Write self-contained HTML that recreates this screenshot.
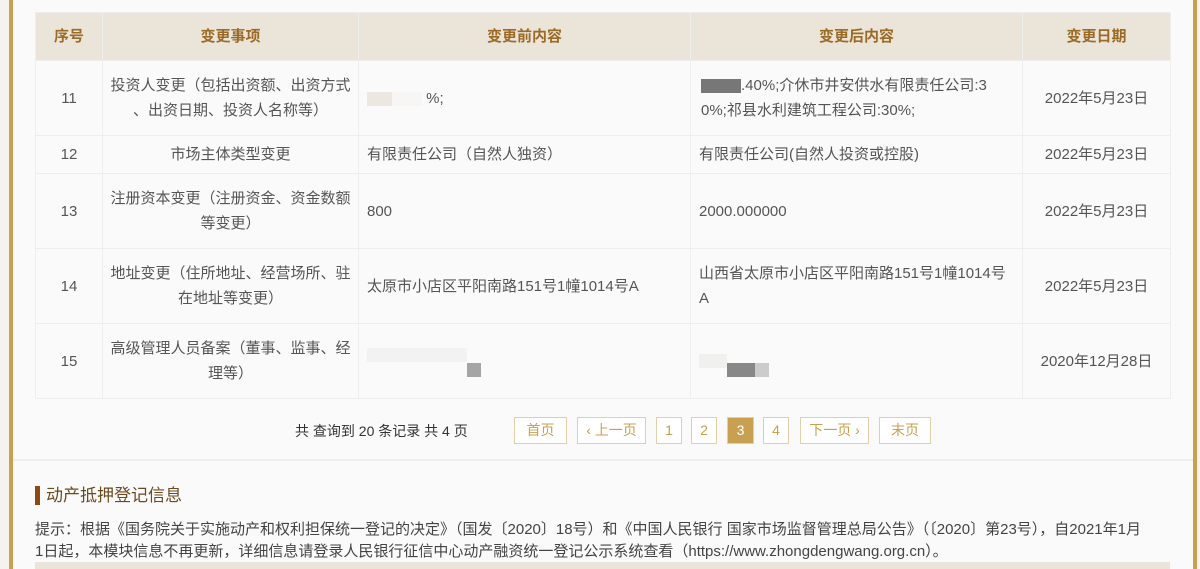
<!DOCTYPE html>
<html><head><meta charset="utf-8"><style>
*{margin:0;padding:0;box-sizing:border-box}
body{width:1200px;height:569px;overflow:hidden;background:#f6f3ee;font-family:"Liberation Sans","Noto Sans CJK SC",sans-serif;color:#555;position:relative}
.lb{position:absolute;left:9px;top:0;width:4px;height:569px;background:#c9a050}
.rb{position:absolute;left:1193px;top:0;width:4px;height:569px;background:#c9a050}
.main{position:absolute;left:13px;top:0;width:1180px;height:569px;background:#fafafa}
table{position:absolute;left:35px;top:12px;border-collapse:collapse;font-size:15px;table-layout:fixed}
td,th{border:1px solid #eeeeee;text-align:center;line-height:25px;color:#555;font-weight:normal}
th{background:#ebe4d8;color:#9a6a26;font-weight:bold;height:48px}
td.l{text-align:left;padding-left:8px}
.blur{display:inline-block;height:14px;vertical-align:middle}
.pg{position:absolute;top:417px;left:0;width:1200px;height:28px;font-size:14px}
.pg span{position:absolute;top:0;height:27px;line-height:25px;border:1px solid #e0cfa8;color:#c9a050;text-align:center;background:#fff}
.pg span.a{background:#c9a050;color:#fff}
.div{position:absolute;left:13px;top:459px;width:1180px;height:2px;background:#f0eeea}
h3{position:absolute;left:35px;top:486px;font-size:17px;font-weight:normal;color:#6b4a20;border-left:5px solid #8a4a10;padding-left:6px;line-height:19px}
.tip{position:absolute;left:35px;top:519px;font-size:15px;line-height:22px;color:#444;width:1158px;white-space:nowrap}
.band{position:absolute;left:35px;top:562px;width:1135px;height:7px;background:#ebe4d8}
</style></head><body>
<div class="main"></div>
<div class="lb"></div><div class="rb"></div>
<table>
<colgroup><col style="width:67px"><col style="width:256px"><col style="width:332px"><col style="width:332px"><col style="width:148px"></colgroup>
<tr><th>序号</th><th>变更事项</th><th>变更前内容</th><th>变更后内容</th><th>变更日期</th></tr>
<tr style="height:75px"><td>11</td><td>投资人变更（包括出资额、出资方式<br>、出资日期、投资人名称等）</td><td class="l"><span class="blur" style="width:25px;background:#ede7e2"></span><span class="blur" style="width:30px;background:#f8f6f4"></span> %;</td><td class="l" style="padding-left:10px"><span class="blur" style="width:40px;background:#777"></span>.40%;介休市井安供水有限责任公司:3<br>0%;祁县水利建筑工程公司:30%;</td><td>2022年5月23日</td></tr>
<tr style="height:38px"><td>12</td><td>市场主体类型变更</td><td class="l">有限责任公司（自然人独资）</td><td class="l">有限责任公司(自然人投资或控股)</td><td>2022年5月23日</td></tr>
<tr style="height:75px"><td>13</td><td>注册资本变更（注册资金、资金数额<br>等变更）</td><td class="l">800</td><td class="l">2000.000000</td><td>2022年5月23日</td></tr>
<tr style="height:75px"><td>14</td><td>地址变更（住所地址、经营场所、驻<br>在地址等变更）</td><td class="l">太原市小店区平阳南路151号1幢1014号A</td><td class="l">山西省太原市小店区平阳南路151号1幢1014号<br>A</td><td>2022年5月23日</td></tr>
<tr style="height:75px"><td>15</td><td>高级管理人员备案（董事、监事、经<br>理等）</td><td class="l"><span class="blur" style="width:100px;background:#f2f2f2;margin-top:-12px"></span><span class="blur" style="width:14px;background:#a5a5a5;margin-top:18px"></span></td><td class="l"><span class="blur" style="width:28px;background:#f0f0ee"></span><span class="blur" style="width:28px;background:#888;margin-top:18px"></span><span class="blur" style="width:14px;background:#ccc;margin-top:18px"></span></td><td>2020年12月28日</td></tr>
</table>
<div class="pg">
<div style="position:absolute;left:295px;top:4px;color:#333;font-size:14px">共 查询到 20 条记录 共 4 页</div>
<span style="left:514px;width:53px">首页</span>
<span style="left:577px;width:69px">‹ 上一页</span>
<span style="left:656px;width:26px">1</span>
<span style="left:691px;width:26px">2</span>
<span class="a" style="left:727px;width:27px">3</span>
<span style="left:763px;width:26px">4</span>
<span style="left:800px;width:69px">下一页 ›</span>
<span style="left:879px;width:52px">末页</span>
</div>
<div class="div"></div>
<h3>动产抵押登记信息</h3>
<div class="tip">提示：根据《国务院关于实施动产和权利担保统一登记的决定》（国发〔2020〕18号）和《中国人民银行 国家市场监督管理总局公告》（〔2020〕第23号），自2021年1月<br>1日起，本模块信息不再更新，详细信息请登录人民银行征信中心动产融资统一登记公示系统查看（https://www.zhongdengwang.org.cn）。</div>
<div class="band"></div>
</body></html>
